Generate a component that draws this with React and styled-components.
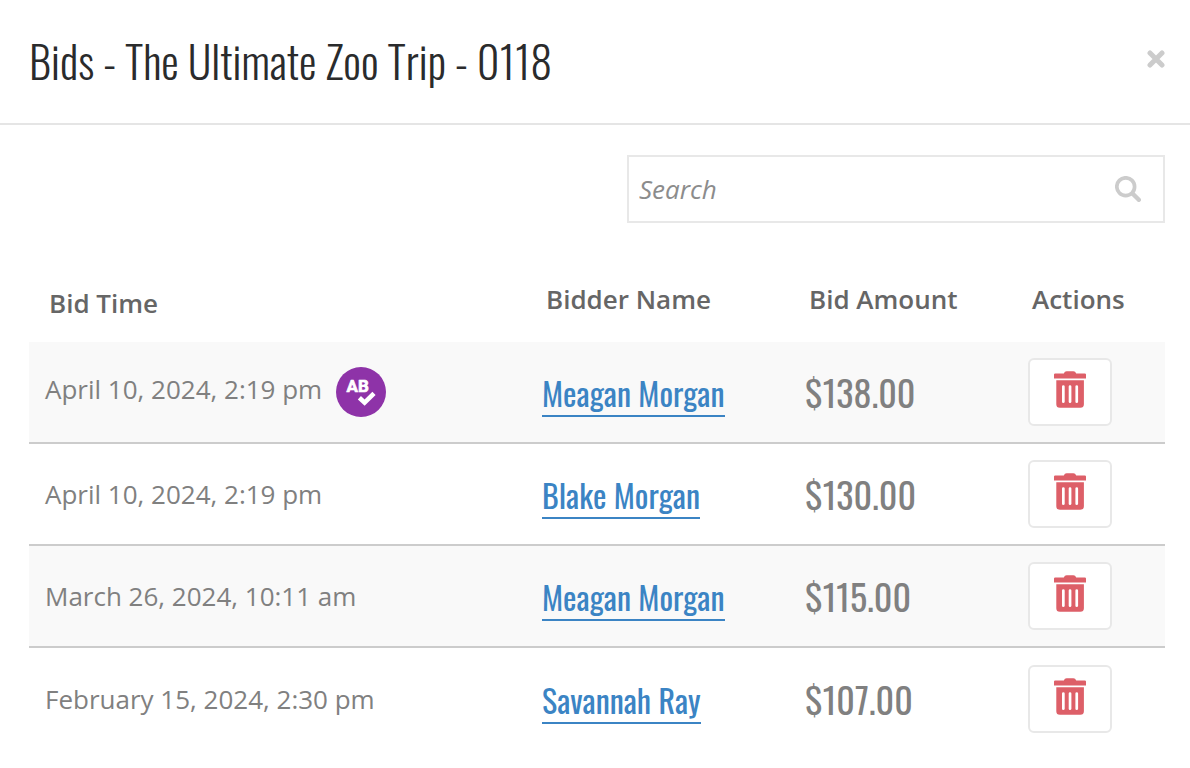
import React, { useState } from 'react'
import styled, { createGlobalStyle } from 'styled-components'

const bids = [
  { id: 1, time: 'April 10, 2024, 2:19 pm', name: 'Meagan Morgan', amount: '$138.00', auto: true },
  { id: 2, time: 'April 10, 2024, 2:19 pm', name: 'Blake Morgan', amount: '$130.00' },
  { id: 3, time: 'March 26, 2024, 10:11 am', name: 'Meagan Morgan', amount: '$115.00' },
  { id: 4, time: 'February 15, 2024, 2:30 pm', name: 'Savannah Ray', amount: '$107.00' },
]

const CloseIcon = () => (
  <svg width="18" height="18" viewBox="0 0 18 18" aria-hidden="true">
    <path d="M3 3l12 12M15 3L3 15" stroke="#ccc" strokeWidth="5" strokeLinecap="round" fill="none" />
  </svg>
)

const SearchIcon = () => (
  <svg width="26" height="26" viewBox="0 0 26 26" aria-hidden="true">
    <circle cx="10.7" cy="10.7" r="8.9" stroke="#ccc" strokeWidth="3.7" fill="none" />
    <path d="M18 18l5.8 5.8" stroke="#ccc" strokeWidth="4.4" strokeLinecap="round" />
  </svg>
)

const TrashIcon = () => (
  <svg width="32" height="37" viewBox="0 0 32 37" aria-hidden="true">
    <path
      fill="#dd5f68"
      d="M1.2 2.4H9.8Q10.6 .3 12.6 .3H19.4Q21.4 .3 22.2 2.4H30.8Q32 2.4 32 3.6V7.4H0V3.6Q0 2.4 1.2 2.4Z"
    />
    <path
      fill="#dd5f68"
      fillRule="evenodd"
      d="M2.3 9.3H29.9V33.2Q29.9 36.8 26.3 36.8H5.9Q2.3 36.8 2.3 33.2ZM9.3 14.2Q8 14.2 8 15.5V30.8Q8 32.1 9.3 32.1T10.7 30.8V15.5Q10.7 14.2 9.3 14.2ZM16 14.2Q14.7 14.2 14.7 15.5V30.8Q14.7 32.1 16 32.1T17.4 30.8V15.5Q17.4 14.2 16 14.2ZM22.7 14.2Q21.4 14.2 21.4 15.5V30.8Q21.4 32.1 22.7 32.1T24.1 30.8V15.5Q24.1 14.2 22.7 14.2Z"
    />
  </svg>
)

const AutoBidBadge = () => (
  <Badge viewBox="0 0 50 50" role="img" aria-label="Auto bid">
    <circle cx="25" cy="25" r="25" fill="#8e33a8" />
    <text x="10.5" y="25" fill="#fff" stroke="#fff" strokeWidth=".7" strokeLinejoin="round">AB</text>
    <path d="M23.4 30.8l5.2 4.8 9.4-9.2" stroke="#fff" strokeWidth="4.6" fill="none" />
  </Badge>
)

const App = () => {
  const [search, setSearch] = useState('')
  const [list, setList] = useState(bids)

  const shown = list.filter((bid) => bid.name.toLowerCase().includes(search.toLowerCase()))

  return (
    <>
      <GlobalStyle />
      <Header>
        <Title>Bids - The Ultimate Zoo Trip - 0118</Title>
        <CloseButton type="button" aria-label="Close"><CloseIcon /></CloseButton>
      </Header>
      <Body>
        <SearchBox>
          <input
            type="text"
            aria-label="Search"
            placeholder="Search"
            value={search}
            onChange={(e) => setSearch(e.target.value)}
          />
          <SearchIcon />
        </SearchBox>
        <Table>
          <thead>
            <tr>
              <Head $drop>Bid Time</Head>
              <Head $width="263px">Bidder Name</Head>
              <Head $width="223px">Bid Amount</Head>
              <Head $width="153px">Actions</Head>
            </tr>
          </thead>
          <tbody>
            {shown.map((bid) => (
              <Row key={bid.id}>
                <td>
                  {bid.time}
                  {bid.auto && <AutoBidBadge />}
                </td>
                <td><Bidder href="#bidder">{bid.name}</Bidder></td>
                <td><Amount>{bid.amount}</Amount></td>
                <td>
                  <DeleteButton
                    type="button"
                    aria-label="Delete bid"
                    onClick={() => setList(list.filter((item) => item.id !== bid.id))}
                  >
                    <TrashIcon />
                  </DeleteButton>
                </td>
              </Row>
            ))}
          </tbody>
        </Table>
      </Body>
    </>
  )
}

const GlobalStyle = createGlobalStyle`
  * {
    box-sizing: border-box;
  }
  body {
    margin: 0;
    background: #fff;
    color: #808080;
    font-family: "Open Sans", sans-serif;
    font-size: 26px;
  }
`;

const Header = styled.header`
  display: flex;
  justify-content: space-between;
  align-items: flex-start;
  padding: 26px 25px 27px 29px;
  border-bottom: 2px solid #e5e5e5;
`;

const Title = styled.h1`
  margin: 0;
  color: #2a2b2c;
  font-family: Oswald, sans-serif;
  font-weight: 300;
  font-size: 44px;
  font-kerning: none;
  line-height: 70px;
`;

const CloseButton = styled.button`
  display: flex;
  margin-top: 24px;
  padding: 0;
  border: none;
  background: transparent;
  cursor: pointer;
`;

const Body = styled.main`
  padding: 30px 25px 16px 29px;
`;

const SearchBox = styled.div`
  display: flex;
  align-items: center;
  width: 538px;
  max-width: 100%;
  height: 68px;
  margin-left: auto;
  padding: 0 22px 0 10px;
  border: 2px solid #e8e8e8;
  input {
    flex: 1;
    min-width: 0;
    padding: 0;
    border: none;
    outline: none;
    background: transparent;
    color: #808080;
    font: inherit;
  }
  input::placeholder {
    color: #8c8c8c;
    font-style: italic;
    opacity: 1;
  }
`;

const Table = styled.table`
  width: 100%;
  margin-top: 52px;
  border-collapse: separate;
  border-spacing: 0;
  table-layout: fixed;
`;

const Head = styled.th`
  width: ${(props) => props.$width || 'auto'};
  height: 67px;
  padding: ${(props) => (props.$drop ? '4px' : '0')} 0 0 20px;
  color: #666;
  font-weight: 600;
  text-align: left;
  line-height: 49px;
  vertical-align: top;
`;

const Row = styled.tr`
  &:nth-child(odd) {
    background: #f9f9f9;
  }
  td {
    height: 102px;
    padding: 16px 0 16px 16px;
    border-bottom: 2px solid #ccc;
  }
  &:last-child td {
    border-bottom: none;
  }
`;

const Badge = styled.svg`
  width: 50px;
  height: 50px;
  margin-left: 14px;
  vertical-align: middle;
  text {
    font-family: Roboto, sans-serif;
    font-weight: 700;
    font-size: 17px;
  }
`;

const Bidder = styled.a`
  display: inline-block;
  margin-top: 3px;
  border-bottom: 2px solid #3b84c4;
  color: #3b84c4;
  font-family: Oswald, sans-serif;
  font-weight: 400;
  font-size: 32px;
  font-kerning: none;
  line-height: 44px;
  text-decoration: none;
`;

const Amount = styled.span`
  font-family: Oswald, sans-serif;
  font-size: 36px;
  font-kerning: none;
  line-height: 52px;
`;

const DeleteButton = styled.button`
  display: flex;
  justify-content: center;
  align-items: flex-start;
  width: 84px;
  height: 68px;
  padding: 11px 0 0;
  border: 2px solid #e8e8e8;
  border-radius: 6px;
  background: #fff;
  cursor: pointer;
`;

export default App
